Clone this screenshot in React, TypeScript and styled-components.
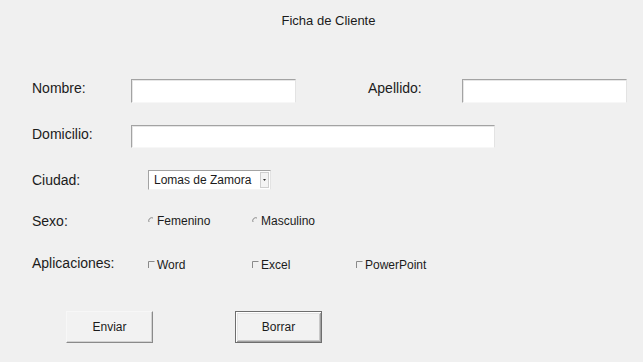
import React from "react";
import styled, { createGlobalStyle } from "styled-components";

const Global = createGlobalStyle`
  html, body { margin: 0; padding: 0; background: #f0f0f0; }
  body { font-family: "Liberation Sans", Arial, sans-serif; color: #1b1b1b; }
`;

const Page = styled.div`
  width: 643px;
  height: 362px;
  display: flex;
  flex-direction: column;
  overflow: hidden;
`;

const Title = styled.div`
  margin-top: 12px;
  height: 18px;
  line-height: 18px;
  font-size: 13px;
  text-align: center;
  padding-left: 14px;
`;

const Row = styled.div<{ $top: number; $h: number }>`
  display: flex;
  align-items: center;
  margin-top: ${(p) => p.$top}px;
  height: ${(p) => p.$h}px;
  padding-left: 32px;
`;

const Label = styled.div<{ $w: number; $lift?: number }>`
  width: ${(p) => p.$w}px;
  flex: none;
  font-size: 14px;
  line-height: 16px;
  padding-bottom: ${(p) => (p.$lift ?? 0) * 2}px;
`;

const TextBox = styled.div<{ $w: number }>`
  width: ${(p) => p.$w}px;
  height: 100%;
  box-sizing: border-box;
  background: #ffffff;
  border-top: 1px solid #a3a3a3;
  border-left: 1px solid #a3a3a3;
  border-right: 1px solid #e3e3e3;
  border-bottom: 1px solid #f7f7f7;
  box-shadow: inset 1px 1px 0 #e6e6e6;
`;

const Select = styled.div`
  margin-left: 16px;
  width: 123px;
  height: 20px;
  box-sizing: border-box;
  background: #fff;
  border-top: 1px solid #a3a3a3;
  border-left: 1px solid #a3a3a3;
  border-right: 1px solid #e3e3e3;
  border-bottom: 1px solid #f4f4f4;
  display: flex;
  align-items: center;
  font-size: 12px;
  padding-left: 5px;
`;

const SelectText = styled.span`
  flex: 1;
`;

const Arrow = styled.div`
  width: 9px;
  height: 16px;
  box-sizing: border-box;
  border: 1px solid #cfcfcf;
  background: #f4f4f4;
  margin-right: 1px;
  display: flex;
  align-items: center;
  justify-content: center;
`;

const Options = styled.div`
  display: flex;
  margin-left: 16px;
`;

const Option = styled.div`
  width: 104px;
  display: flex;
  align-items: center;
  font-size: 12px;
  line-height: 14px;
  gap: 2px;
`;

const Buttons = styled.div`
  display: flex;
  margin-top: 36px;
  padding-left: 66px;
  gap: 82px;
`;

const Button = styled.div<{ $focused?: boolean }>`
  width: 87px;
  height: 32px;
  box-sizing: border-box;
  display: flex;
  align-items: center;
  justify-content: center;
  font-size: 12px;
  background: #f2f2f2;
  ${(p) =>
    p.$focused
      ? `border: 1px solid #6e6e6e; box-shadow: inset 1px 1px 0 #ffffff, inset -1px -1px 0 #a0a0a0, inset 2px 2px 0 #e4e4e4, inset -2px -2px 0 #c8c8c8;`
      : `border-top: 1px solid #f7f7f7; border-left: 1px solid #f7f7f7; border-right: 1px solid #8a8a8a; border-bottom: 1px solid #8a8a8a; box-shadow: inset -1px -1px 0 #d2d2d2;`}
`;

const RadioMark = () => (
  <svg width="7" height="7" viewBox="0 0 7 7" style={{ flex: "none", marginTop: -2 }}>
    <path d="M1 5 A3 3 0 0 1 5 1" fill="none" stroke="#8a8a8a" strokeWidth="1" />
  </svg>
);

const CheckMark = () => (
  <svg width="7" height="7" viewBox="0 0 7 7" style={{ flex: "none", marginTop: -1 }}>
    <path d="M0.5 7 V0.5 H6.5" fill="none" stroke="#8a8a8a" strokeWidth="1" />
  </svg>
);

const ArrowIcon = () => (
  <svg width="3" height="2" viewBox="0 0 3 2">
    <path d="M0 0 H3 L1.5 2 Z" fill="#333" />
  </svg>
);

export default function App() {
  return (
    <Page>
      <Global />
      <Title>Ficha de Cliente</Title>
      <Row $top={49} $h={24}>
        <Label $w={99} $lift={3}>Nombre:</Label>
        <TextBox $w={165} />
        <Label $w={94} $lift={3} style={{ marginLeft: 72 }}>Apellido:</Label>
        <TextBox $w={165} />
      </Row>
      <Row $top={22} $h={23}>
        <Label $w={99} $lift={2.5}>Domicilio:</Label>
        <TextBox $w={364} />
      </Row>
      <Row $top={22} $h={20}>
        <Label $w={100}>Ciudad:</Label>
        <Select>
          <SelectText>Lomas de Zamora</SelectText>
          <Arrow>
            <ArrowIcon />
          </Arrow>
        </Select>
      </Row>
      <Row $top={21} $h={20}>
        <Label $w={100}>Sexo:</Label>
        <Options>
          <Option>
            <RadioMark />
            Femenino
          </Option>
          <Option>
            <RadioMark />
            Masculino
          </Option>
        </Options>
      </Row>
      <Row $top={24} $h={20}>
        <Label $w={100} $lift={2}>Aplicaciones:</Label>
        <Options>
          <Option>
            <CheckMark />
            Word
          </Option>
          <Option>
            <CheckMark />
            Excel
          </Option>
          <Option>
            <CheckMark />
            PowerPoint
          </Option>
        </Options>
      </Row>
      <Buttons>
        <Button>Enviar</Button>
        <Button $focused>Borrar</Button>
      </Buttons>
    </Page>
  );
}
